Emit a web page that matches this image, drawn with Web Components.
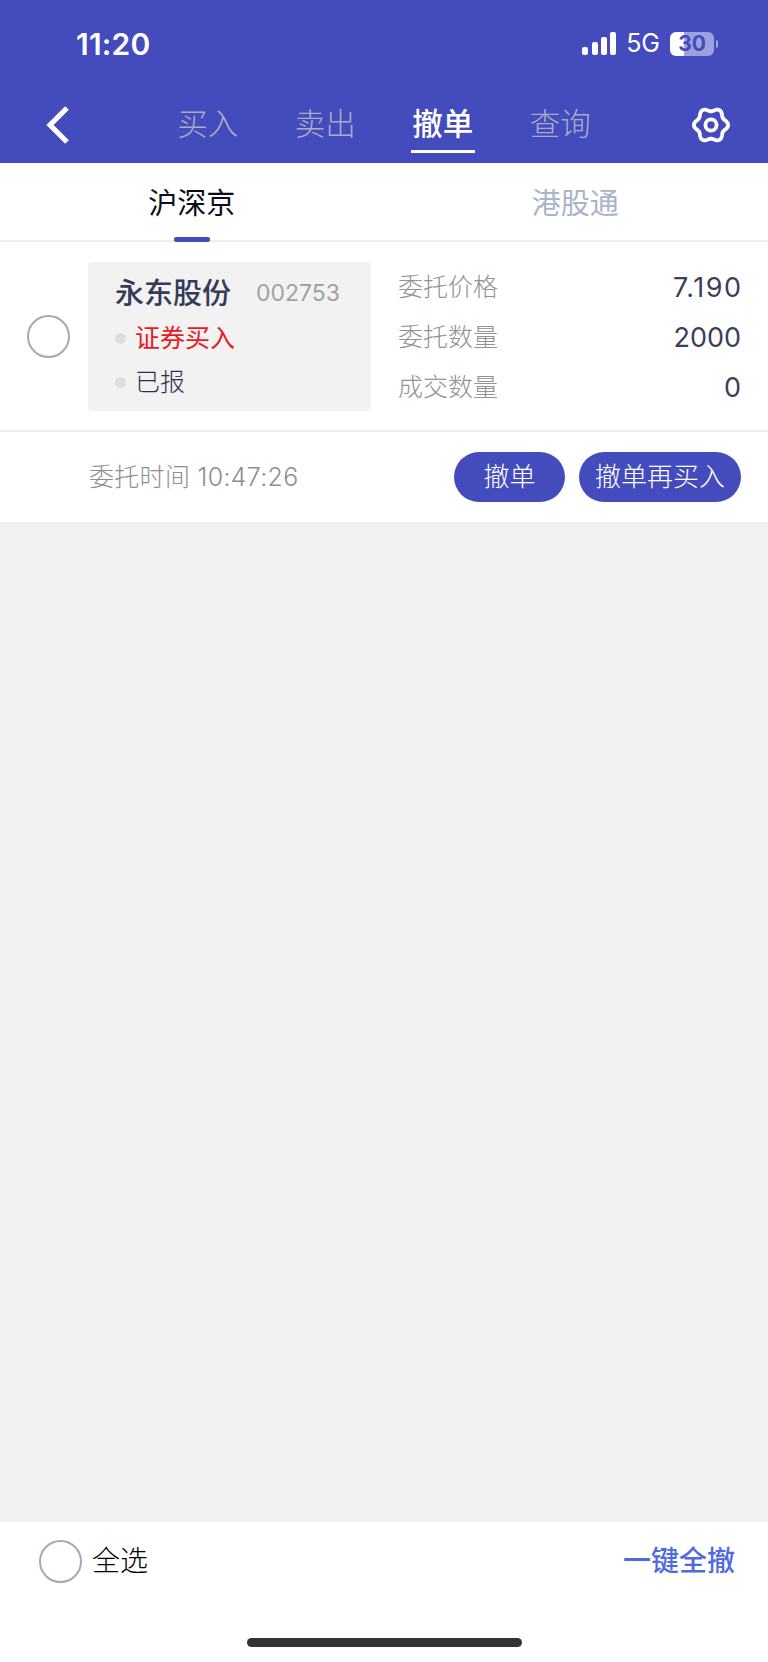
<!DOCTYPE html>
<html lang="zh-CN">
<head>
<meta charset="utf-8">
<title>撤单</title>
<style>
  html, body { margin: 0; height: 100%; }
  body {
    display: flex; flex-direction: column; width: 768px; height: 1662px; overflow: hidden;
    background: #f1f1f1; color: #3a3f5c;
    font-family: Inter, "Noto Sans CJK SC", sans-serif;
  }
  .filler { flex: 1; }
</style>
</head>
<body>
  <app-header></app-header>
  <market-tabs></market-tabs>
  <order-row name="永东股份" code="002753" side="证券买入" state="已报"
             price="7.190" qty="2000" filled="0" time="10:47:26"></order-row>
  <div class="filler"></div>
  <select-footer></select-footer>

<script>
(function () {
  const BLUE = '#434bbd';

  class RadioDot extends HTMLElement {
    connectedCallback() {
      this.attachShadow({ mode: 'open' }).innerHTML = `
        <style>
          :host { display:block; width:43px; height:43px; flex:none; box-sizing:border-box;
                  border:2px solid #a6a8b8; border-radius:50%; background:#fff; }
        </style>`;
    }
  }

  class PillButton extends HTMLElement {
    connectedCallback() {
      this.attachShadow({ mode: 'open' }).innerHTML = `
        <style>
          :host { display:flex; align-items:center; justify-content:center; box-sizing:border-box;
                  height:50px; border-radius:25px; background:${BLUE}; color:#fff;
                  font-size:26px; font-weight:300; line-height:1; padding:0 16px; }
        </style>
        <slot></slot>`;
    }
  }

  class AppHeader extends HTMLElement {
    connectedCallback() {
      const root = this.attachShadow({ mode: 'open' });
      root.innerHTML = `
        <style>
          :host { display:block; background:${BLUE}; color:#fff; height:163px; }
          .status { display:flex; align-items:center; height:87px; padding:0 50px 0 76px; }
          .clock { font-size:30px; font-weight:600; letter-spacing:.2px; flex:1; line-height:1; }
          .signal { display:flex; align-items:flex-end; gap:3.3px; height:23px; }
          .signal i { display:block; width:6px; background:#fff; border-radius:2px; }
          .net { font-size:25px; line-height:1; margin:0 10px; }
          .battery { display:flex; align-items:center; justify-content:center; width:44px; height:24px;
                     border-radius:6px; color:${BLUE}; font-size:21px; font-weight:700; line-height:1;
                     background:linear-gradient(to right,#fff 32%,rgba(255,255,255,.48) 32%); }
          .nub { width:2px; height:8px; margin-left:2px; border-radius:0 2px 2px 0; background:rgba(255,255,255,.5); }
          .nav { display:flex; align-items:center; height:76px; padding:0 38px 0 46px; }
          .nav svg { display:block; flex:none; }
          .items { flex:1; display:flex; justify-content:center; gap:56.5px; padding-left:4px; }
          .item { position:relative; font-size:30.5px; font-weight:300; line-height:40px; color:#a8abc6; top:-1px; }
          .item.on { color:#fff; font-weight:500; }
          .item.on::after { content:''; position:absolute; left:-1px; right:-2px; bottom:-9px; height:3px; background:#fff; }
        </style>
        <div class="status">
          <span class="clock">11:20</span>
          <span class="signal"><i style="height:8px"></i><i style="height:13px"></i><i style="height:18px"></i><i style="height:23px"></i></span>
          <span class="net">5G</span>
          <span class="battery">30</span>
          <span class="nub"></span>
        </div>
        <div class="nav">
          <svg width="26" height="40" viewBox="0 0 26 40"><path d="M21 3 L4 20 L21 37" fill="none" stroke="#fff" stroke-width="5.2"/></svg>
          <div class="items">
            <span class="item">买入</span>
            <span class="item">卖出</span>
            <span class="item on">撤单</span>
            <span class="item">查询</span>
          </div>
          <svg width="38" height="38" viewBox="0 0 38 38">
            <path class="gear" fill="none" stroke="#fff" stroke-width="3.8" stroke-linejoin="round"/>
            <circle cx="19" cy="19" r="5.6" fill="none" stroke="#fff" stroke-width="3.8"/>
          </svg>
        </div>`;

      // six-lobed outline of the settings gear
      let d = '';
      for (let i = 0; i <= 180; i++) {
        const a = i / 180 * Math.PI * 2;
        const r = 15.4 + 1.7 * Math.cos(6 * a);
        d += (i === 0 ? 'M' : 'L') + (19 + r * Math.cos(a)).toFixed(2) + ' ' + (19 + r * Math.sin(a)).toFixed(2) + ' ';
      }
      root.querySelector('.gear').setAttribute('d', d + 'Z');
    }
  }

  class MarketTabs extends HTMLElement {
    connectedCallback() {
      this.attachShadow({ mode: 'open' }).innerHTML = `
        <style>
          :host { display:grid; grid-template-columns:1fr 1fr; height:79px; box-sizing:border-box;
                  padding-right:1px; background:#fff; border-bottom:2px solid #eceef4; }
          .tab { display:flex; flex-direction:column; align-items:center; font-size:29px; color:#a9b3c9; }
          .tab span { flex:1; display:flex; align-items:center; padding-top:2px; }
          .tab.on { color:#0c0c1c; }
          .tab b { width:36px; height:5px; margin-bottom:-2px; border-radius:2px; }
          .tab.on b { background:${BLUE}; }
        </style>
        <div class="tab on"><span>沪深京</span><b></b></div>
        <div class="tab"><span>港股通</span><b></b></div>`;
    }
  }

  class OrderRow extends HTMLElement {
    connectedCallback() {
      const a = (n) => this.getAttribute(n);
      this.attachShadow({ mode: 'open' }).innerHTML = `
        <style>
          :host { display:block; background:#fff; }
          .top { display:flex; align-items:center; height:190px; box-sizing:border-box;
                 padding:0 27px 0 27px; border-bottom:2px solid #ececec; }
          .card { box-sizing:border-box; width:283px; height:149px; margin-left:18px; padding:14px 0 0 27px;
                  background:#f2f2f3; border-radius:4px; display:flex; flex-direction:column; }
          .title { display:flex; align-items:center; justify-content:space-between; height:36px; padding-right:31px; }
          .name { font-size:29px; font-weight:500; color:#343a58; line-height:1; }
          .code { font-size:23px; color:#a2a2a2; line-height:1; }
          .tag { display:flex; align-items:center; gap:9px; height:44px; font-size:25px; font-weight:300; color:#2c314e; line-height:1; }
          .tag::before { content:''; width:11px; height:11px; border-radius:50%; background:#dcdde3; flex:none; }
          .side { color:#e61a1f; font-weight:400; margin-top:5px; }
          .stats { flex:1; margin-left:27px; display:grid; row-gap:10px; grid-auto-rows:40px; padding-top:2px; }
          .stat { display:flex; align-items:center; justify-content:space-between; }
          .stat span { font-size:25px; font-weight:300; color:#939393; line-height:1; }
          .stat em { font-style:normal; font-size:27px; color:#3a3f5c; line-height:1; }
          .stat em.price { letter-spacing:1.5px; margin-right:-1.5px; }
          .bottom { display:flex; align-items:center; height:90px; padding:0 27px 0 89px; }
          .time { flex:1; font-size:25px; font-weight:300; letter-spacing:.3px; color:#8e8e8e; line-height:1; }
          pill-button + pill-button { margin-left:14px; }
          .short { width:111px; }
          .long { width:162px; }
        </style>
        <div class="top">
          <radio-dot></radio-dot>
          <div class="card">
            <div class="title"><span class="name">${a('name')}</span><span class="code">${a('code')}</span></div>
            <div class="tag side">${a('side')}</div>
            <div class="tag">${a('state')}</div>
          </div>
          <div class="stats">
            <div class="stat"><span>委托价格</span><em class="price">${a('price')}</em></div>
            <div class="stat"><span>委托数量</span><em>${a('qty')}</em></div>
            <div class="stat"><span>成交数量</span><em>${a('filled')}</em></div>
          </div>
        </div>
        <div class="bottom">
          <span class="time">委托时间 ${a('time')}</span>
          <pill-button class="short">撤单</pill-button>
          <pill-button class="long">撤单再买入</pill-button>
        </div>`;
    }
  }

  class SelectFooter extends HTMLElement {
    connectedCallback() {
      this.attachShadow({ mode: 'open' }).innerHTML = `
        <style>
          :host { display:flex; flex-direction:column; height:140px; background:#fff; }
          .bar { display:flex; align-items:center; height:78px; padding:0 33px 0 39px; box-sizing:border-box; font-size:28px; line-height:1; }
          .all { margin-left:10px; flex:1; color:#000; font-weight:300; }
          .wipe { color:#4f69e2; font-weight:500; }
          .home { width:275px; height:9px; margin:38px auto 0; border-radius:5px; background:#333; }
        </style>
        <div class="bar">
          <radio-dot></radio-dot>
          <span class="all">全选</span>
          <span class="wipe">一键全撤</span>
        </div>
        <div class="home"></div>`;
    }
  }

  customElements.define('radio-dot', RadioDot);
  customElements.define('pill-button', PillButton);
  customElements.define('app-header', AppHeader);
  customElements.define('market-tabs', MarketTabs);
  customElements.define('order-row', OrderRow);
  customElements.define('select-footer', SelectFooter);
})();
</script>
</body>
</html>
